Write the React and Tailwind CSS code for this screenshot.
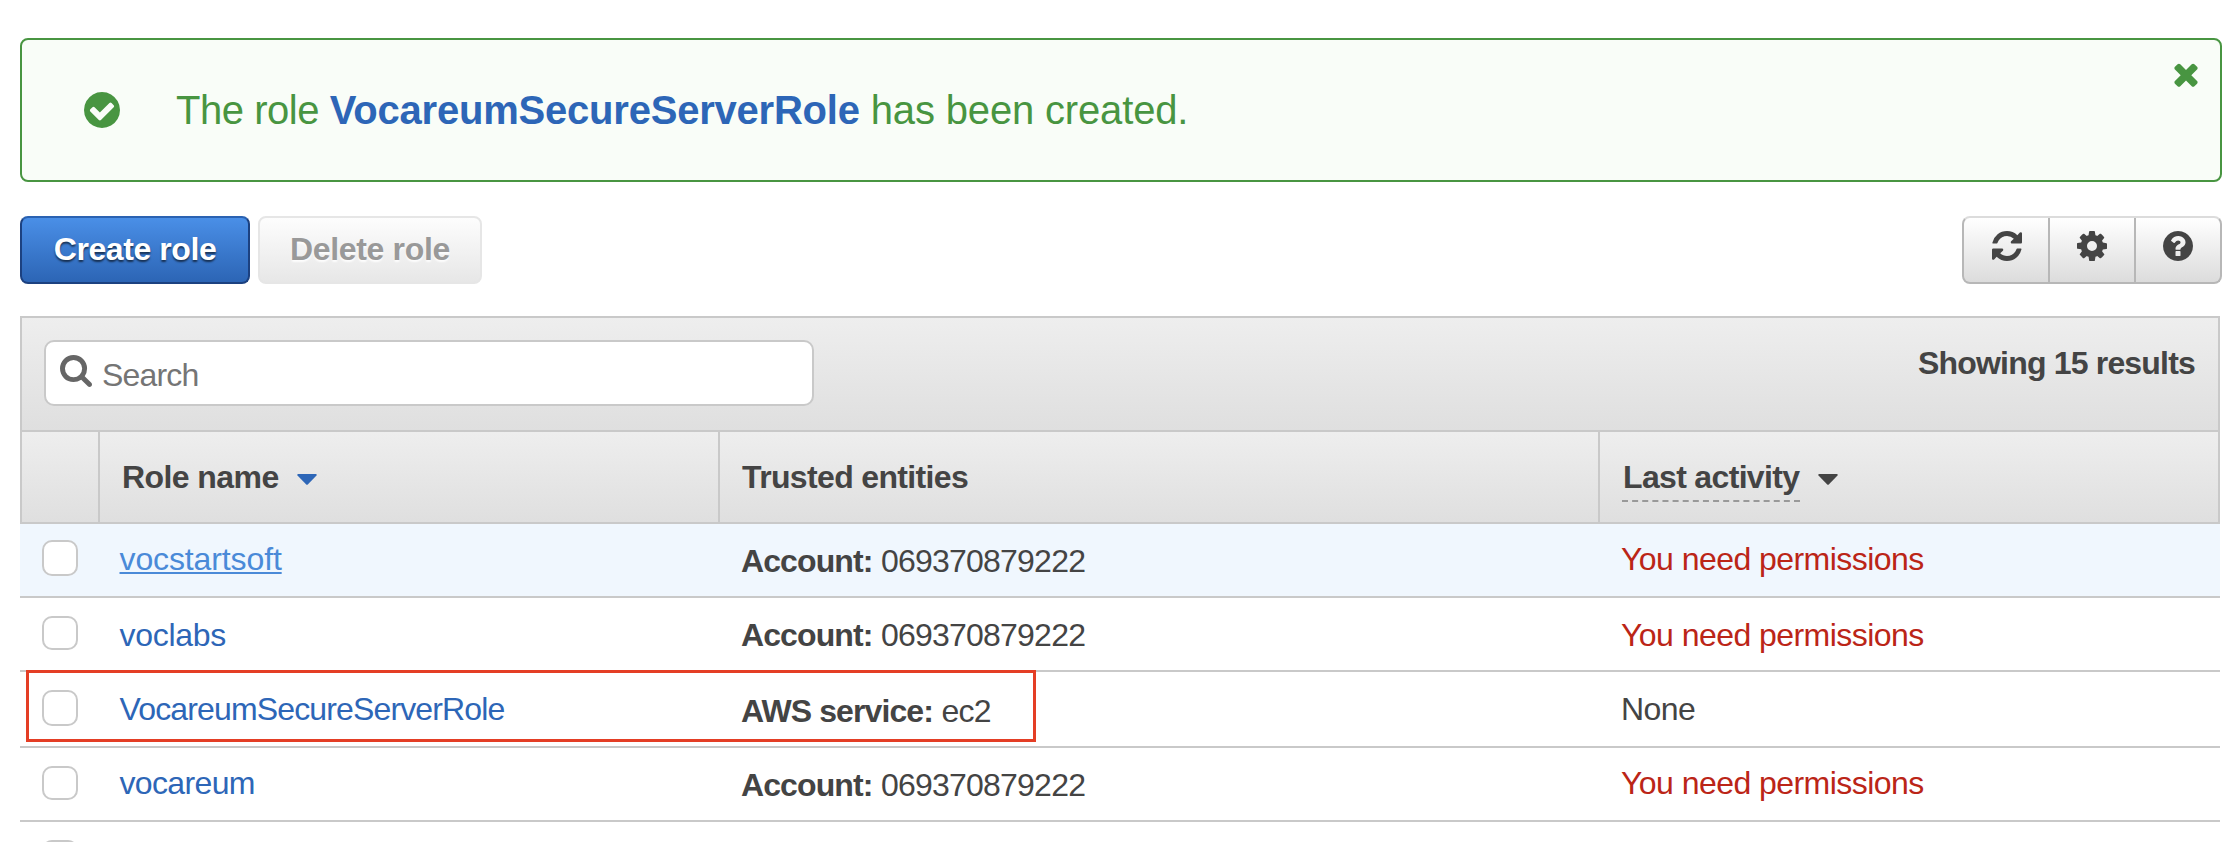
function Glyph({ d, className }) {
  return (
    <svg viewBox="128 128 1536 1536" fill="currentColor" className={className} aria-hidden="true">
      <path d={d} />
    </svg>
  );
}

const CHECK =
  'M1412 734q0-28-18-46l-91-90q-19-19-45-19t-45 19l-408 407-226-226q-19-19-45-19t-45 19l-91 90q-18 18-18 46 0 27 18 45l362 362q19 19 45 19 27 0 46-19l543-543q18-18 18-45zm252 162q0 209-103 385.5t-279.5 279.5-385.5 103-385.5-103-279.5-279.5-103-385.5 103-385.5 279.5-279.5 385.5-103 385.5 103 279.5 279.5 103 385.5z';
const TIMES =
  'M1490 1322q0 40-28 68l-136 136q-28 28-68 28t-68-28l-294-294-294 294q-28 28-68 28t-68-28l-136-136q-28-28-28-68t28-68l294-294-294-294q-28-28-28-68t28-68l136-136q28-28 68-28t68 28l294 294 294-294q28-28 68-28t68 28l136 136q28 28 28 68t-28 68l-294 294 294 294q28 28 28 68z';
const REFRESH =
  'M1639 1056q0 5-1 7-64 268-268 434.5t-478 166.5q-146 0-282.5-55t-243.5-157l-129 129q-19 19-45 19t-45-19-19-45v-448q0-26 19-45t45-19h448q26 0 45 19t19 45-19 45l-137 137q71 66 161 102t187 36q134 0 250-65t186-179q11-17 53-117 8-23 30-23h192q13 0 22.5 9.5t9.5 22.5zm25-800v448q0 26-19 45t-45 19h-448q-26 0-45-19t-19-45 19-45l138-138q-148-137-349-137-134 0-250 65t-186 179q-11 17-53 117-8 23-30 23h-199q-13 0-22.5-9.5t-9.5-22.5v-7q65-268 270-434.5t480-166.5q146 0 284 55.5t245 156.5l130-129q19-19 45-19t45 19 19 45z';
const COG =
  'M1152 896q0-106-75-181t-181-75-181 75-75 181 75 181 181 75 181-75 75-181zm512-109v222q0 12-8 23t-20 13l-185 28q-19 54-39 91 35 50 107 138 10 12 10 25t-9 23q-27 37-99 108t-94 71q-12 0-26-9l-138-108q-44 23-91 38-16 136-29 186-7 28-36 28h-222q-14 0-24.5-8.5t-11.5-21.5l-28-184q-49-16-90-37l-141 107q-10 9-25 9-14 0-25-11-126-114-165-168-7-10-7-23 0-12 8-23 15-21 51-66.5t54-70.5q-27-50-41-99l-183-27q-13-2-21-12.5t-8-23.5v-222q0-12 8-23t19-13l186-28q14-46 39-92-40-57-107-138-10-12-10-24 0-10 9-23 26-36 98.5-107.5t94.5-71.5q13 0 26 10l138 107q44-23 91-38 16-136 29-186 7-28 36-28h222q14 0 24.5 8.5t11.5 21.5l28 184q49 16 90 37l142-107q9-9 24-9 13 0 25 10 129 119 165 170 7 8 7 22 0 12-8 23-15 21-51 66.5t-54 70.5q26 50 41 98l183 28q13 2 21 12.5t8 23.5z';
const QUESTION =
  'M1024 1376v-192q0-14-9-23t-23-9h-192q-14 0-23 9t-9 23v192q0 14 9 23t23 9h192q14 0 23-9t9-23zm256-672q0-88-55.5-163t-138.5-116-170-41q-243 0-371 213-15 24 8 42l132 100q7 6 19 6 16 0 25-12 53-68 86-92 34-24 86-24 48 0 85.5 26t37.5 59q0 38-20 61t-68 45q-63 28-115.5 86.5t-52.5 125.5v36q0 14 9 23t23 9h192q14 0 23-9t9-23q0-19 21.5-49.5t54.5-49.5q32-18 49-28.5t46-35 44.5-48 28-60.5 12.5-81zm384 192q0 209-103 385.5t-279.5 279.5-385.5 103-385.5-103-279.5-279.5-103-385.5 103-385.5 279.5-279.5 385.5-103 385.5 103 279.5 279.5 103 385.5z';

function Caret({ className }) {
  return (
    <svg viewBox="0 0 20 11" className={className} fill="currentColor" aria-hidden="true">
      <path d="M1 0h18q1.3 .6 .5 1.6L11 10.3q-1 1-2 0L.5 1.600Q-.3 .6 1 0z" />
    </svg>
  );
}

function Alert() {
  return (
    <div className="flex h-[144px] items-center justify-between rounded-lg border-2 border-[#489541] bg-[#f9fdf8] pl-[62px] pr-[22px] text-[#489541]">
      <div className="flex items-center">
        <Glyph d={CHECK} className="size-9" />
        <p className="ml-[56px] flex whitespace-pre text-[40px] leading-[48px]">
          <span className="tracking-[-0.456px]">The role </span>
          <strong className="tracking-[-0.211px] text-[#2d66b7]">VocareumSecureServerRole</strong>
          <span className="tracking-[-0.16px]"> has been created.</span>
        </p>
      </div>
      <button className="flex self-start pt-[19px]" aria-label="Dismiss">
        <Glyph d={TIMES} className="size-[30px] -mr-[3px]" />
      </button>
    </div>
  );
}

function Actions() {
  return (
    <div className="mt-[34px] flex h-[68px] justify-between">
      <div className="flex gap-2 font-bold">
        <button className="w-[230px] rounded-lg border-2 border-[#1c4180] border-t-[#2a62b2] bg-linear-to-b from-[#4a8fe7] to-[#2c65b5] pb-0.5 tracking-[-0.42px] text-white [text-shadow:0_2px_2px_rgba(0,0,0,0.6)]">
          Create role
        </button>
        <button className="w-[224px] rounded-lg border-2 border-[#e6e6e6] bg-linear-to-b from-[#fdfdfd] to-[#e7e7e7] pb-0.5 tracking-[-0.35px] text-[#999] [text-shadow:0_2px_2px_rgba(255,255,255,0.9)]">
          Delete role
        </button>
      </div>
      <div className="flex w-[260px] rounded-lg border-2 border-[#b7b7b7] border-t-[#dcdcdc] bg-linear-to-b from-white to-[#dcdcdc] text-[#444]">
        <button className="flex w-[86px] justify-center border-r-2 border-[#b7b7b7] pl-px pt-[13px]" aria-label="Refresh">
          <Glyph d={REFRESH} className="size-[30px]" />
        </button>
        <button className="flex w-[86px] justify-center border-r-2 border-[#b7b7b7] pt-[13px]" aria-label="Settings">
          <Glyph d={COG} className="size-[30px]" />
        </button>
        <button className="flex grow justify-center pt-[13px]" aria-label="Help">
          <Glyph d={QUESTION} className="size-[30px]" />
        </button>
      </div>
    </div>
  );
}

const DENIED = 'You need permissions';
const rows = [
  { name: 'vocstartsoft', label: 'Account:', value: '069370879222', activity: DENIED, row: 'h-[74px] bg-[#f0f7fe]', pad: 'pt-[15px]', entPad: 'pt-[17px]', box: 'mt-4 h-9', link: 'tracking-[-0.12px] text-[#4a8ad8] underline decoration-2 underline-offset-2' },
  { name: 'voclabs', label: 'Account:', value: '069370879222', activity: DENIED, row: 'h-[74px]', pad: 'pt-[17px]', entPad: 'pt-[17px]', box: 'mt-[18px] h-[34px]', link: 'tracking-[-0.3px] text-[#2d66b7]' },
  { name: 'VocareumSecureServerRole', label: 'AWS service:', value: 'ec2', activity: 'None', row: 'h-[76px]', pad: 'pt-[17px]', entPad: 'pt-[19px]', box: 'mt-[18px] h-9', link: 'tracking-[-0.858px] text-[#2d66b7]', marked: true },
  { name: 'vocareum', label: 'Account:', value: '069370879222', activity: DENIED, row: 'h-[74px]', pad: 'pt-[15px]', entPad: 'pt-[17px]', box: 'mt-[18px] h-[34px]', link: 'tracking-[-0.65px] text-[#2d66b7]' },
];

function Row({ r }) {
  return (
    <div className={`relative flex shrink-0 items-start border-b-2 border-[#c9c9c9] ${r.row}`}>
      <div className="w-[99.5px] shrink-0 pl-[22px]">
        <div className={`w-9 rounded-[10px] border-2 border-[#c9c9c9] bg-white ${r.box}`} />
      </div>
      <div className={`w-[621.5px] shrink-0 ${r.pad}`}>
        <a className={r.link}>{r.name}</a>
      </div>
      <div className={`flex w-[880px] shrink-0 ${r.entPad}`}>
        <strong className="tracking-[-0.9px]">{r.label}</strong>
        <span className="ml-[8.500px] tracking-[-0.78px]">{r.value}</span>
      </div>
      <div className={r.pad}>
        {r.activity === DENIED ? (
          <span className="tracking-[-0.55px] text-[#bb2517]">{r.activity}</span>
        ) : (
          <span className="tracking-[-0.568px]">{r.activity}</span>
        )}
      </div>
      {r.marked && <div className="absolute -top-0.5 left-1.5 h-[72px] w-[1010px] border-3 border-[#e43e25]" />}
    </div>
  );
}

export default function App() {
  return (
    <main className="flex h-[842px] w-[2240px] flex-col overflow-hidden bg-white pl-5 pr-[18px] pt-[38px] font-['Liberation_Sans',Arial,sans-serif] text-[32px] leading-10 text-[#444]">
      <Alert />
      <Actions />
      <section className="mt-8 flex w-[2200px] flex-col">
        <div className="flex h-[114px] items-start justify-between border-2 border-b-0 border-[#c9c9c9] bg-linear-to-b from-[#eee] to-[#dfdfdf] pl-[22px] pr-[23px]">
          <div className="mt-[22px] flex h-[66px] w-[770px] items-start rounded-[10px] border-2 border-[#c9c9c9] bg-white pl-[14px]">
            <svg viewBox="64 128 1664 1664" fill="currentColor" className="mt-[13px] size-8 text-[#666]" aria-hidden="true">
              <path d="M1216 832q0-185-131.5-316.5t-316.5-131.5-316.5 131.5-131.5 316.5 131.5 316.5 316.5 131.5 316.5-131.5 131.5-316.5zm512 832q0 52-38 90t-90 38q-54 0-90-38l-343-342q-179 124-399 124-143 0-273.5-55.5t-225-150-150-225-55.5-273.5 55.5-273.5 150-225 225-150 273.5-55.5 273.5 55.5 225 150 150 225 55.5 273.5q0 220-124 399l343 343q37 37 37 90z" />
            </svg>
            <span className="ml-[10px] mt-[13px] tracking-[-0.82px] text-[#757575]">Search</span>
          </div>
          <strong className="mt-[25px] tracking-[-0.813px]">Showing 15 results</strong>
        </div>
        <div className="flex h-[94px] border-2 border-[#c9c9c9] bg-linear-to-b from-[#eee] to-[#dfdfdf] font-bold">
          <div className="w-[78px] border-r-2 border-[#c9c9c9]" />
          <div className="flex w-[620px] items-center border-r-2 border-[#c9c9c9] pl-[22px] tracking-[-0.579px]">
            Role name
            <Caret className="ml-[18px] mt-[5px] h-[11px] w-5 text-[#2d66b7]" />
          </div>
          <div className="flex w-[880px] items-center border-r-2 border-[#c9c9c9] pl-[22px] tracking-[-0.65px]">Trusted entities</div>
          <div className="flex items-center pl-[22px]">
            <span className="mt-[5px] w-[178px] border-b-2 border-dashed border-[#999] pb-[3px] pl-px tracking-[-0.664px]">Last activity</span>
            <Caret className="ml-[18px] mt-[5px] h-[11px] w-5" />
          </div>
        </div>
        {rows.map((r) => (
          <Row key={r.name} r={r} />
        ))}
        <div className="h-5 overflow-hidden pl-[22px] pt-[18px]">
          <div className="h-9 w-9 rounded-[10px] border-2 border-[#c9c9c9] bg-white" />
        </div>
      </section>
    </main>
  );
}
